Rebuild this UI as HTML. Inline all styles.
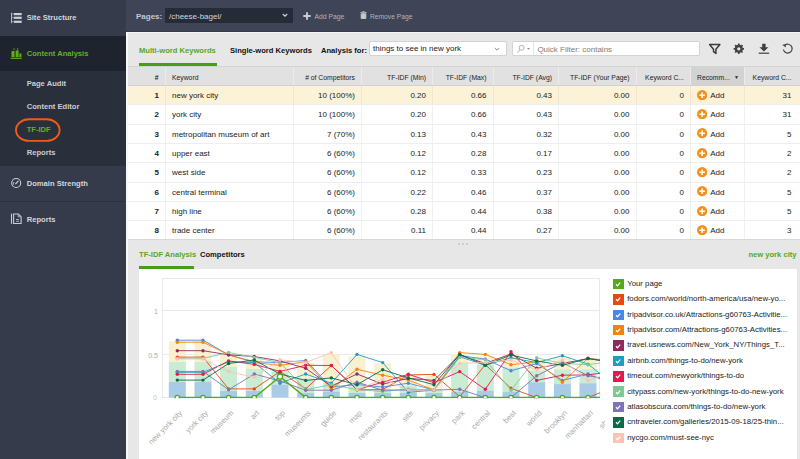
<!DOCTYPE html>
<html><head><meta charset="utf-8"><title>TF-IDF</title>
<style>
*{box-sizing:border-box;margin:0;padding:0}
html,body{width:800px;height:459px;overflow:hidden;background:#353b4b;font-family:"Liberation Sans",sans-serif;}
body{position:relative;font-size:8px;color:#222}
.abs,.side div,.side svg,.top *,.tabs>*,.hdr span,.rows div,.rows span,.lg,.btabs>*{position:absolute}
/* sidebar */
.side{position:absolute;left:0;top:0;width:125.6px;height:459px;background:#353b4b}
.side .r{left:0;width:125.6px}
.side .t{left:26.7px;font-weight:bold;font-size:7.6px;color:#d3d6dd;white-space:nowrap;line-height:10px}
.side .g{color:#60b31e}
/* top bar */
.top{position:absolute;left:125.6px;top:0;width:674.4px;height:31px;background:#3f4556}
/* panel */
.panel{position:absolute;left:127px;top:31.5px;width:673px;height:428px;background:#e7e7e7}
.tabs{position:absolute;left:0;top:0;width:673px;height:35px}
.tabs .tb{font-weight:bold;font-size:7.6px;line-height:10px;white-space:nowrap;color:#111}
.hdr{position:absolute;left:0;top:34px;width:673px;height:20px;background:#e1e1e1;border-top:1px solid #d4d4d4;border-bottom:1px solid #d0d0d0}
.hdr span{top:0;height:18px;line-height:21px;font-size:6.8px;color:#222;white-space:nowrap;border-left:1px solid #ececec;padding:0 6px}
.rows{position:absolute;left:0;top:54px;width:673px;height:153.4px;overflow:hidden;background:#fff}
.rows div{left:0;width:673px;height:20.32px;border-top:1px solid #eeeeee;background:#fff}
.rows div.sel{background:#fbf2d8;border-top-color:#efe6cc}
.rows span{top:0;height:18.32px;line-height:19px;font-size:8px;color:#222;white-space:nowrap;border-left:1px solid #f0f0f0;padding:0 6px;text-align:right}
.rows div.sel span{border-left-color:#efe6cc}
.c0{left:0;width:38px;border-left:none!important}
.c1{left:38px;width:128px}
.c2{left:166px;width:68px}
.c3{left:234px;width:71px}
.c4{left:304.5px;width:61px}
.c5{left:365.5px;width:65.5px}
.c6{left:431px;width:77.5px}
.c7{left:508.5px;width:54.5px}
.c8{left:563px;width:54px}
.c9{left:617px;width:56px;padding-right:8.5px!important}
.rows .c0{font-weight:bold;padding-right:6px}
.rows .c1,.rows .c8{text-align:left}
.rows .c8{padding-left:19.2px}
.addi{position:absolute;left:6.05px;top:3.65px}
.bottom{position:absolute;left:0;top:207.3px;width:673px;height:220px;background:#e7e7e7;border-top:1px solid #d8d8d8}
.btabs .tb{font-weight:bold;font-size:7.6px;line-height:10px;white-space:nowrap;color:#111}
.white{position:absolute;left:12px;top:237.5px;width:658px;height:190px;background:#fff}
.chart{position:absolute;left:12px;top:237.5px}
.dt{position:absolute;top:0;width:2.2px;height:2.2px;background:#c6c6c6;border-radius:1px}
.lg{left:613.2px;height:10px;white-space:nowrap}
.lg i{position:absolute;left:0;top:-0.1px;width:10.4px;height:10.4px;display:block}
.lg i svg{position:absolute;left:0.2px;top:0.2px}
.lg span{position:absolute;left:14px;top:-1px;line-height:11px;font-size:7.8px;color:#222}
</style></head><body>
<div class="side">
  <div class="r" style="top:0;height:36px;background:#353b4b"></div>
  <div class="r" style="top:36px;height:35px;background:#1f232e"></div>
  <div class="r" style="top:71px;height:94px;background:#2a2f3c"></div>
  <div class="r" style="top:165px;height:1px;background:#2b303d"></div>
  <div class="r" style="top:200.5px;height:1px;background:#2c313e"></div>
  <div class="t" style="top:13px">Site Structure</div>
  <div class="t g" style="top:49px">Content Analysis</div>
  <div class="t" style="top:78.5px;color:#c9cdd5">Page Audit</div>
  <div class="t" style="top:102px;color:#c9cdd5">Content Editor</div>
  <div class="t g" style="top:125px">TF-IDF</div>
  <div class="t" style="top:148px;color:#c9cdd5">Reports</div>
  <div class="t" style="top:178.5px">Domain Strength</div>
  <div class="t" style="top:214.5px">Reports</div>
  <svg style="left:0;top:0" width="126" height="240" viewBox="0 0 126 240">
    <!-- site structure icon -->
    <g fill="#ccd0d8"><rect x="11" y="12.8" width="1.1" height="10.4" opacity="0.85"/><rect x="12" y="13.6" width="1.8" height="0.8" opacity="0.6"/><rect x="12" y="17.3" width="1.8" height="0.8" opacity="0.6"/><rect x="12" y="21.3" width="1.8" height="0.8" opacity="0.6"/><rect x="13.8" y="13" width="7.9" height="2.2"/><rect x="13.8" y="16.7" width="7.9" height="2.2"/><rect x="13.8" y="20.7" width="7.9" height="2.2"/></g>
    <!-- content analysis icon -->
    <g fill="#5cb01d"><rect x="11.5" y="51" width="3" height="6"/><rect x="15.6" y="50.4" width="3" height="6.6"/><rect x="19.3" y="53.5" width="2.1" height="3.5"/><rect x="10.7" y="57.7" width="11" height="1.2"/><rect x="13.4" y="48.4" width="1.2" height="1.4"/><rect x="17" y="48.4" width="1.2" height="1.2"/></g>
    <!-- domain strength icon -->
    <g fill="none" stroke="#c8ccd4" stroke-width="1.1"><circle cx="16.2" cy="183" r="4.5"/><path d="M15.4 184l3-3"/><path d="M13.6 184.6a2.8 2.8 0 0 1 0.3 -2.6" stroke-width="0.9"/></g>
    <!-- reports icon -->
    <g fill="none" stroke="#c8ccd4" stroke-width="1.1"><path d="M13.6 214h4.8l2.7 2.7v6.8h-7.5z"/><path d="M11.5 213.6v10.2"/><path d="M16 219.5h3M16 221.3h3" stroke-width="0.8"/><path d="M18.2 214.2v2.6h2.6" stroke-width="0.8"/></g>
    <!-- annotation -->
    <rect x="16" y="119.3" width="43.6" height="21.6" rx="13" ry="10.8" fill="none" stroke="#f15a1b" stroke-width="1.9"/>
  </svg>
</div>
<div class="top"><div class="abs" style="left:0.4px;top:0;width:674px;height:31px">
  <div style="left:10px;top:11.5px;font-weight:bold;font-size:8px;line-height:10px;color:#c4c8d1">Pages:</div>
  <div style="left:39px;top:8px;width:128px;height:15px;background:#262b38;border-radius:1px"></div>
  <div style="left:43px;top:11.5px;font-size:8px;line-height:10px;color:#d3d6dd;white-space:nowrap">/cheese-bagel/</div>
  <svg style="left:156px;top:13px" width="6" height="5" viewBox="0 0 6 5"><path d="M0.8 1l2.2 2.2L5.2 1" fill="none" stroke="#d3d6dd" stroke-width="1.1"/></svg>
  <svg style="left:177.2px;top:11.5px" width="8" height="8" viewBox="0 0 8 8"><path d="M4 0.3v7.4M0.3 4h7.4" stroke="#c9cdd5" stroke-width="1.9"/></svg>
  <div style="left:188.5px;top:11.5px;font-size:6.8px;line-height:9px;color:#aeb3bf;white-space:nowrap">Add Page</div>
  <svg style="left:233.6px;top:11px" width="7" height="8" viewBox="0 0 8 9"><path d="M0.5 1.5h7M3 0.6h2M1.3 3h5.4v5.5H1.3z" fill="#c4c8d1" stroke="#c4c8d1" stroke-width="1"/></svg>
  <div style="left:244px;top:11.5px;font-size:6.7px;line-height:9px;color:#aeb3bf;white-space:nowrap">Remove Page</div>
</div></div>
<div class="abs" style="left:125.5px;top:31.6px;width:0.8px;height:428px;background:#1b1f2b"></div>
<div class="panel">
  <div class="abs" style="left:0;top:0;width:673px;height:1px;background:#f4f4f4"></div>
  <div class="tabs">
    <div class="tb" style="left:12px;top:14px;color:#55a91c">Multi-word Keywords</div>
    <div style="left:12px;top:31px;width:77.5px;height:3px;background:#479f10"></div>
    <div class="tb" style="left:103px;top:14px">Single-word Keywords</div>
    <div class="tb" style="left:194px;top:14px">Analysis for:</div>
    <div style="left:242.2px;top:9.5px;width:137.4px;height:15px;background:#fff;border:1px solid #d3d3d3;border-radius:2px"></div>
    <div style="left:246px;top:12px;font-size:8px;line-height:10px;white-space:nowrap;color:#222">things to see in new york</div>
    <svg style="left:367px;top:15px" width="6" height="5" viewBox="0 0 6 5"><path d="M0.8 1l2.2 2.2L5.2 1" fill="none" stroke="#808080" stroke-width="0.95"/></svg>
    <div style="left:385.4px;top:9.6px;width:187.2px;height:14.8px;background:#fff;border:1px solid #d3d3d3;border-radius:2px"></div>
    <div style="left:406px;top:10.6px;width:1px;height:12.8px;background:#e2e2e2"></div>
    <svg style="left:389.4px;top:12px" width="16" height="10" viewBox="0 0 16 10"><circle cx="5.6" cy="3.8" r="2.5" fill="none" stroke="#aaa" stroke-width="0.9"/><path d="M3.8 5.8L1.5 8.5" stroke="#aaa" stroke-width="1"/><path d="M11 4h3l-1.5 1.8z" fill="#888"/></svg>
    <div style="left:410.4px;top:13.2px;font-size:8px;line-height:10px;white-space:nowrap;color:#7c7c7c">Quick Filter: contains</div>
    <svg style="left:577px;top:9.5px" width="96" height="18" viewBox="704 41 96 18">
      <path d="M709.6 44.6h10.3l-4 4.6v4.2l-2.4-1.8v-2.4z" fill="none" stroke="#3a3a3a" stroke-width="1.5" stroke-linejoin="round"/>
      <g transform="translate(738.8 48.8)"><circle r="3" fill="none" stroke="#444" stroke-width="2.1"/><g stroke="#444" stroke-width="1.7"><path d="M0 -5.2v10.4M-5.2 0h10.4M-3.7 -3.7l7.4 7.4M-3.7 3.7l7.4 -7.4"/></g><circle r="1.6" fill="#e7e7e7"/></g>
      <g fill="#3f3f3f"><path d="M762.2 43.7h3.4v3.6h2.8l-4.5 4.2-4.5-4.2h2.8z"/><rect x="758.7" y="52.6" width="10.4" height="1.2"/></g>
      <path d="M784.6 45.5A4.4 4.4 0 1 1 783.4 49.5" fill="none" stroke="#444" stroke-width="1.2"/><path d="M782.4 44.6h3.2v3.2z" fill="#333" transform="rotate(-8 784 46)"/>
    </svg>
  </div>
  <div class="hdr">
    <span class="c0" style="text-align:right;font-weight:bold;padding-right:6.5px">#</span>
    <span class="c1">Keyword</span>
    <span class="c2" style="text-align:right"># of Competitors</span>
    <span class="c3" style="text-align:right">TF-IDF (Min)</span>
    <span class="c4" style="text-align:right">TF-IDF (Max)</span>
    <span class="c5" style="text-align:right">TF-IDF (Avg)</span>
    <span class="c6" style="text-align:right">TF-IDF (Your Page)</span>
    <span class="c7" style="text-align:right">Keyword C...</span>
    <span class="c8" style="background:#d3d3d3">Recomm...<b style="position:absolute;right:5px;top:0;font-size:5px">&#9660;</b></span>
    <span class="c9" style="text-align:right">Keyword C...</span>
  </div>
  <div class="rows">
<div class="sel" style="top:-0.50px"><span class="c0">1</span><span class="c1">new york city</span><span class="c2">10 (100%)</span><span class="c3">0.20</span><span class="c4">0.66</span><span class="c5">0.43</span><span class="c6">0.00</span><span class="c7">0</span><span class="c8"><svg class="addi" width="10.3" height="10.3" viewBox="0 0 10.3 10.3"><circle cx="5.15" cy="5.15" r="5.15" fill="#f6901c"/><path d="M5.15 2.4v5.5M2.4 5.15h5.5" stroke="#fff" stroke-width="1.5"/></svg>Add</span><span class="c9">31</span></div>
<div style="top:18.82px"><span class="c0">2</span><span class="c1">york city</span><span class="c2">10 (100%)</span><span class="c3">0.20</span><span class="c4">0.66</span><span class="c5">0.43</span><span class="c6">0.00</span><span class="c7">0</span><span class="c8"><svg class="addi" width="10.3" height="10.3" viewBox="0 0 10.3 10.3"><circle cx="5.15" cy="5.15" r="5.15" fill="#f6901c"/><path d="M5.15 2.4v5.5M2.4 5.15h5.5" stroke="#fff" stroke-width="1.5"/></svg>Add</span><span class="c9">31</span></div>
<div style="top:38.14px"><span class="c0">3</span><span class="c1">metropolitan museum of art</span><span class="c2">7 (70%)</span><span class="c3">0.13</span><span class="c4">0.43</span><span class="c5">0.32</span><span class="c6">0.00</span><span class="c7">0</span><span class="c8"><svg class="addi" width="10.3" height="10.3" viewBox="0 0 10.3 10.3"><circle cx="5.15" cy="5.15" r="5.15" fill="#f6901c"/><path d="M5.15 2.4v5.5M2.4 5.15h5.5" stroke="#fff" stroke-width="1.5"/></svg>Add</span><span class="c9">5</span></div>
<div style="top:57.46px"><span class="c0">4</span><span class="c1">upper east</span><span class="c2">6 (60%)</span><span class="c3">0.12</span><span class="c4">0.28</span><span class="c5">0.17</span><span class="c6">0.00</span><span class="c7">0</span><span class="c8"><svg class="addi" width="10.3" height="10.3" viewBox="0 0 10.3 10.3"><circle cx="5.15" cy="5.15" r="5.15" fill="#f6901c"/><path d="M5.15 2.4v5.5M2.4 5.15h5.5" stroke="#fff" stroke-width="1.5"/></svg>Add</span><span class="c9">2</span></div>
<div style="top:76.78px"><span class="c0">5</span><span class="c1">west side</span><span class="c2">6 (60%)</span><span class="c3">0.12</span><span class="c4">0.33</span><span class="c5">0.23</span><span class="c6">0.00</span><span class="c7">0</span><span class="c8"><svg class="addi" width="10.3" height="10.3" viewBox="0 0 10.3 10.3"><circle cx="5.15" cy="5.15" r="5.15" fill="#f6901c"/><path d="M5.15 2.4v5.5M2.4 5.15h5.5" stroke="#fff" stroke-width="1.5"/></svg>Add</span><span class="c9">2</span></div>
<div style="top:96.10px"><span class="c0">6</span><span class="c1">central terminal</span><span class="c2">6 (60%)</span><span class="c3">0.22</span><span class="c4">0.46</span><span class="c5">0.37</span><span class="c6">0.00</span><span class="c7">0</span><span class="c8"><svg class="addi" width="10.3" height="10.3" viewBox="0 0 10.3 10.3"><circle cx="5.15" cy="5.15" r="5.15" fill="#f6901c"/><path d="M5.15 2.4v5.5M2.4 5.15h5.5" stroke="#fff" stroke-width="1.5"/></svg>Add</span><span class="c9">5</span></div>
<div style="top:115.42px"><span class="c0">7</span><span class="c1">high line</span><span class="c2">6 (60%)</span><span class="c3">0.28</span><span class="c4">0.44</span><span class="c5">0.38</span><span class="c6">0.00</span><span class="c7">0</span><span class="c8"><svg class="addi" width="10.3" height="10.3" viewBox="0 0 10.3 10.3"><circle cx="5.15" cy="5.15" r="5.15" fill="#f6901c"/><path d="M5.15 2.4v5.5M2.4 5.15h5.5" stroke="#fff" stroke-width="1.5"/></svg>Add</span><span class="c9">5</span></div>
<div style="top:134.74px"><span class="c0">8</span><span class="c1">trade center</span><span class="c2">6 (60%)</span><span class="c3">0.11</span><span class="c4">0.44</span><span class="c5">0.27</span><span class="c6">0.00</span><span class="c7">0</span><span class="c8"><svg class="addi" width="10.3" height="10.3" viewBox="0 0 10.3 10.3"><circle cx="5.15" cy="5.15" r="5.15" fill="#f6901c"/><path d="M5.15 2.4v5.5M2.4 5.15h5.5" stroke="#fff" stroke-width="1.5"/></svg>Add</span><span class="c9">3</span></div>
  </div>
  <div class="bottom"></div>
  <div class="abs" style="left:331.3px;top:211.7px;width:12px;height:3px"><i class="dt" style="left:0"></i><i class="dt" style="left:3.8px"></i><i class="dt" style="left:7.6px"></i></div>
  <div class="btabs">
    <div class="tb" style="left:12px;top:218px;color:#55a91c">TF-IDF Analysis</div>
    <div style="left:12px;top:234.8px;width:55px;height:2.8px;background:#479f10"></div>
    <div class="tb" style="left:73px;top:218px">Competitors</div>
    <div class="tb" style="right:3.5px;top:218px;color:#55a91c">new york city</div>
  </div>
  <div class="white"></div>
<svg class="chart" width="466" height="190" viewBox="139 269 466 190">
<defs><clipPath id="cp"><rect x="162" y="278" width="438" height="120.3"/></clipPath></defs>
<g stroke="#e9e9e9" stroke-width="1" fill="none">
<path d="M162.5 278.5H599.5V397.5"/>
<path d="M162.5 278.5V397.5"/>
<path d="M162 310.5H600M162 354.5H600M162 397.5H600"/>
</g>
<g clip-path="url(#cp)">
<rect x="168.8" y="341.2" width="17" height="20.5" fill="#f9f0d0"/>
<rect x="168.8" y="361.8" width="17" height="20.1" fill="#c9ecd2"/>
<rect x="168.8" y="381.9" width="17" height="15.7" fill="#a9cbe6"/>
<rect x="194.5" y="341.2" width="17" height="20.5" fill="#f9f0d0"/>
<rect x="194.5" y="361.8" width="17" height="20.1" fill="#c9ecd2"/>
<rect x="194.5" y="381.9" width="17" height="15.7" fill="#a9cbe6"/>
<rect x="220.1" y="354.8" width="17" height="12.2" fill="#f9f0d0"/>
<rect x="220.1" y="367.0" width="17" height="24.0" fill="#c9ecd2"/>
<rect x="220.1" y="391.0" width="17" height="6.6" fill="#a9cbe6"/>
<rect x="245.8" y="359.1" width="17" height="9.9" fill="#f9f0d0"/>
<rect x="245.8" y="369.0" width="17" height="21.8" fill="#c9ecd2"/>
<rect x="245.8" y="390.9" width="17" height="6.7" fill="#a9cbe6"/>
<rect x="271.5" y="361.8" width="17" height="9.6" fill="#f9f0d0"/>
<rect x="271.5" y="371.4" width="17" height="13.1" fill="#c9ecd2"/>
<rect x="271.5" y="384.5" width="17" height="13.1" fill="#a9cbe6"/>
<rect x="297.2" y="362.6" width="17" height="15.7" fill="#f9f0d0"/>
<rect x="297.2" y="378.4" width="17" height="14.6" fill="#c9ecd2"/>
<rect x="297.2" y="393.0" width="17" height="4.6" fill="#a9cbe6"/>
<rect x="322.8" y="353.9" width="17" height="29.3" fill="#f9f0d0"/>
<rect x="322.8" y="383.2" width="17" height="8.3" fill="#c9ecd2"/>
<rect x="322.8" y="391.5" width="17" height="6.1" fill="#a9cbe6"/>
<rect x="348.5" y="356.5" width="17" height="28.8" fill="#f9f0d0"/>
<rect x="348.5" y="385.4" width="17" height="7.6" fill="#c9ecd2"/>
<rect x="348.5" y="393.0" width="17" height="4.6" fill="#a9cbe6"/>
<rect x="374.2" y="363.5" width="17" height="25.3" fill="#f9f0d0"/>
<rect x="374.2" y="388.9" width="17" height="4.1" fill="#c9ecd2"/>
<rect x="374.2" y="393.0" width="17" height="4.6" fill="#a9cbe6"/>
<rect x="399.8" y="375.8" width="17" height="9.6" fill="#f9f0d0"/>
<rect x="399.8" y="385.4" width="17" height="7.6" fill="#c9ecd2"/>
<rect x="399.8" y="393.0" width="17" height="4.6" fill="#a9cbe6"/>
<rect x="425.5" y="375.8" width="17" height="14.0" fill="#f9f0d0"/>
<rect x="425.5" y="389.7" width="17" height="3.2" fill="#c9ecd2"/>
<rect x="425.5" y="393.0" width="17" height="4.6" fill="#a9cbe6"/>
<rect x="451.2" y="353.9" width="17" height="9.6" fill="#f9f0d0"/>
<rect x="451.2" y="363.5" width="17" height="28.0" fill="#c9ecd2"/>
<rect x="451.2" y="391.5" width="17" height="6.1" fill="#a9cbe6"/>
<rect x="476.8" y="356.5" width="17" height="8.1" fill="#f9f0d0"/>
<rect x="476.8" y="364.7" width="17" height="26.0" fill="#c9ecd2"/>
<rect x="476.8" y="390.6" width="17" height="7.0" fill="#a9cbe6"/>
<rect x="502.5" y="353.9" width="17" height="13.5" fill="#f9f0d0"/>
<rect x="502.5" y="367.4" width="17" height="24.0" fill="#c9ecd2"/>
<rect x="502.5" y="391.5" width="17" height="6.1" fill="#a9cbe6"/>
<rect x="528.2" y="360.0" width="17" height="10.5" fill="#f9f0d0"/>
<rect x="528.2" y="370.5" width="17" height="11.7" fill="#c9ecd2"/>
<rect x="528.2" y="382.2" width="17" height="15.4" fill="#a9cbe6"/>
<rect x="553.9" y="357.4" width="17" height="11.9" fill="#f9f0d0"/>
<rect x="553.9" y="369.3" width="17" height="14.8" fill="#c9ecd2"/>
<rect x="553.9" y="384.1" width="17" height="13.5" fill="#a9cbe6"/>
<rect x="579.5" y="360.0" width="17" height="9.3" fill="#f9f0d0"/>
<rect x="579.5" y="369.3" width="17" height="13.9" fill="#c9ecd2"/>
<rect x="579.5" y="383.2" width="17" height="14.4" fill="#a9cbe6"/>
<rect x="605.2" y="358.3" width="17" height="13.1" fill="#f9f0d0"/>
<rect x="605.2" y="371.4" width="17" height="17.5" fill="#c9ecd2"/>
<rect x="605.2" y="388.9" width="17" height="8.7" fill="#a9cbe6"/>
<polyline points="177.3,357.1 203.0,357.1 228.6,388.9 254.3,388.9 280.0,371.4 305.7,388.9 331.3,365.5 357.0,389.7 382.7,389.7 408.3,374.9 434.0,374.4 459.7,396.7 485.3,364.7 511.0,388.3 536.7,397.6 562.4,397.6 588.0,397.6 613.7,387.1" fill="none" stroke="#e8490f" stroke-width="0.9"/>
<circle cx="177.3" cy="357.1" r="1.7" fill="#e8490f"/>
<circle cx="203.0" cy="357.1" r="1.7" fill="#e8490f"/>
<circle cx="228.6" cy="388.9" r="1.7" fill="#e8490f"/>
<circle cx="254.3" cy="388.9" r="1.7" fill="#e8490f"/>
<circle cx="280.0" cy="371.4" r="1.7" fill="#e8490f"/>
<circle cx="305.7" cy="388.9" r="1.7" fill="#e8490f"/>
<circle cx="331.3" cy="365.5" r="1.7" fill="#e8490f"/>
<circle cx="357.0" cy="389.7" r="1.7" fill="#e8490f"/>
<circle cx="382.7" cy="389.7" r="1.7" fill="#e8490f"/>
<circle cx="408.3" cy="374.9" r="1.7" fill="#e8490f"/>
<circle cx="434.0" cy="374.4" r="1.7" fill="#e8490f"/>
<circle cx="459.7" cy="396.7" r="1.7" fill="#e8490f"/>
<circle cx="485.3" cy="364.7" r="1.7" fill="#e8490f"/>
<circle cx="511.0" cy="388.3" r="1.7" fill="#e8490f"/>
<circle cx="536.7" cy="397.6" r="1.7" fill="#e8490f"/>
<circle cx="562.4" cy="397.6" r="1.7" fill="#e8490f"/>
<circle cx="588.0" cy="397.6" r="1.7" fill="#e8490f"/>
<circle cx="613.7" cy="387.1" r="1.7" fill="#e8490f"/>
<polyline points="177.3,340.2 203.0,340.2 228.6,354.8 254.3,361.8 280.0,362.6 305.7,360.5 331.3,387.1 357.0,384.5 382.7,387.1 408.3,383.2 434.0,390.0 459.7,355.6 485.3,359.1 511.0,370.8 536.7,363.5 562.4,380.4 588.0,374.0 613.7,384.5" fill="none" stroke="#4a86e8" stroke-width="0.9"/>
<circle cx="177.3" cy="340.2" r="1.7" fill="#4a86e8"/>
<circle cx="203.0" cy="340.2" r="1.7" fill="#4a86e8"/>
<circle cx="228.6" cy="354.8" r="1.7" fill="#4a86e8"/>
<circle cx="254.3" cy="361.8" r="1.7" fill="#4a86e8"/>
<circle cx="280.0" cy="362.6" r="1.7" fill="#4a86e8"/>
<circle cx="305.7" cy="360.5" r="1.7" fill="#4a86e8"/>
<circle cx="331.3" cy="387.1" r="1.7" fill="#4a86e8"/>
<circle cx="357.0" cy="384.5" r="1.7" fill="#4a86e8"/>
<circle cx="382.7" cy="387.1" r="1.7" fill="#4a86e8"/>
<circle cx="408.3" cy="383.2" r="1.7" fill="#4a86e8"/>
<circle cx="434.0" cy="390.0" r="1.7" fill="#4a86e8"/>
<circle cx="459.7" cy="355.6" r="1.7" fill="#4a86e8"/>
<circle cx="485.3" cy="359.1" r="1.7" fill="#4a86e8"/>
<circle cx="511.0" cy="370.8" r="1.7" fill="#4a86e8"/>
<circle cx="536.7" cy="363.5" r="1.7" fill="#4a86e8"/>
<circle cx="562.4" cy="380.4" r="1.7" fill="#4a86e8"/>
<circle cx="588.0" cy="374.0" r="1.7" fill="#4a86e8"/>
<circle cx="613.7" cy="384.5" r="1.7" fill="#4a86e8"/>
<polyline points="177.3,342.2 203.0,342.2 228.6,354.8 254.3,362.6 280.0,365.3 305.7,361.8 331.3,388.9 357.0,369.3 382.7,375.2 408.3,380.1 434.0,390.0 459.7,352.6 485.3,354.4 511.0,364.7 536.7,361.8 562.4,382.2 588.0,358.3 613.7,360.9" fill="none" stroke="#f5820a" stroke-width="0.9"/>
<circle cx="177.3" cy="342.2" r="1.7" fill="#f5820a"/>
<circle cx="203.0" cy="342.2" r="1.7" fill="#f5820a"/>
<circle cx="228.6" cy="354.8" r="1.7" fill="#f5820a"/>
<circle cx="254.3" cy="362.6" r="1.7" fill="#f5820a"/>
<circle cx="280.0" cy="365.3" r="1.7" fill="#f5820a"/>
<circle cx="305.7" cy="361.8" r="1.7" fill="#f5820a"/>
<circle cx="331.3" cy="388.9" r="1.7" fill="#f5820a"/>
<circle cx="357.0" cy="369.3" r="1.7" fill="#f5820a"/>
<circle cx="382.7" cy="375.2" r="1.7" fill="#f5820a"/>
<circle cx="408.3" cy="380.1" r="1.7" fill="#f5820a"/>
<circle cx="434.0" cy="390.0" r="1.7" fill="#f5820a"/>
<circle cx="459.7" cy="352.6" r="1.7" fill="#f5820a"/>
<circle cx="485.3" cy="354.4" r="1.7" fill="#f5820a"/>
<circle cx="511.0" cy="364.7" r="1.7" fill="#f5820a"/>
<circle cx="536.7" cy="361.8" r="1.7" fill="#f5820a"/>
<circle cx="562.4" cy="382.2" r="1.7" fill="#f5820a"/>
<circle cx="588.0" cy="358.3" r="1.7" fill="#f5820a"/>
<circle cx="613.7" cy="360.9" r="1.7" fill="#f5820a"/>
<polyline points="177.3,350.7 203.0,350.7 228.6,354.8 254.3,356.5 280.0,360.9 305.7,368.3 331.3,386.2 357.0,374.0 382.7,384.1 408.3,378.4 434.0,380.4 459.7,354.8 485.3,363.5 511.0,353.9 536.7,368.3 562.4,363.5 588.0,358.5 613.7,362.6" fill="none" stroke="#8e2a5e" stroke-width="0.9"/>
<circle cx="177.3" cy="350.7" r="1.7" fill="#8e2a5e"/>
<circle cx="203.0" cy="350.7" r="1.7" fill="#8e2a5e"/>
<circle cx="228.6" cy="354.8" r="1.7" fill="#8e2a5e"/>
<circle cx="254.3" cy="356.5" r="1.7" fill="#8e2a5e"/>
<circle cx="280.0" cy="360.9" r="1.7" fill="#8e2a5e"/>
<circle cx="305.7" cy="368.3" r="1.7" fill="#8e2a5e"/>
<circle cx="331.3" cy="386.2" r="1.7" fill="#8e2a5e"/>
<circle cx="357.0" cy="374.0" r="1.7" fill="#8e2a5e"/>
<circle cx="382.7" cy="384.1" r="1.7" fill="#8e2a5e"/>
<circle cx="408.3" cy="378.4" r="1.7" fill="#8e2a5e"/>
<circle cx="434.0" cy="380.4" r="1.7" fill="#8e2a5e"/>
<circle cx="459.7" cy="354.8" r="1.7" fill="#8e2a5e"/>
<circle cx="485.3" cy="363.5" r="1.7" fill="#8e2a5e"/>
<circle cx="511.0" cy="353.9" r="1.7" fill="#8e2a5e"/>
<circle cx="536.7" cy="368.3" r="1.7" fill="#8e2a5e"/>
<circle cx="562.4" cy="363.5" r="1.7" fill="#8e2a5e"/>
<circle cx="588.0" cy="358.5" r="1.7" fill="#8e2a5e"/>
<circle cx="613.7" cy="362.6" r="1.7" fill="#8e2a5e"/>
<polyline points="177.3,372.3 203.0,372.3 228.6,361.8 254.3,362.6 280.0,383.2 305.7,374.0 331.3,383.2 357.0,354.4 382.7,362.6 408.3,392.4 434.0,390.0 459.7,356.7 485.3,365.3 511.0,357.8 536.7,362.6 562.4,355.7 588.0,364.1 613.7,384.5" fill="none" stroke="#1a9fc0" stroke-width="0.9"/>
<circle cx="177.3" cy="372.3" r="1.7" fill="#1a9fc0"/>
<circle cx="203.0" cy="372.3" r="1.7" fill="#1a9fc0"/>
<circle cx="228.6" cy="361.8" r="1.7" fill="#1a9fc0"/>
<circle cx="254.3" cy="362.6" r="1.7" fill="#1a9fc0"/>
<circle cx="280.0" cy="383.2" r="1.7" fill="#1a9fc0"/>
<circle cx="305.7" cy="374.0" r="1.7" fill="#1a9fc0"/>
<circle cx="331.3" cy="383.2" r="1.7" fill="#1a9fc0"/>
<circle cx="357.0" cy="354.4" r="1.7" fill="#1a9fc0"/>
<circle cx="382.7" cy="362.6" r="1.7" fill="#1a9fc0"/>
<circle cx="408.3" cy="392.4" r="1.7" fill="#1a9fc0"/>
<circle cx="434.0" cy="390.0" r="1.7" fill="#1a9fc0"/>
<circle cx="459.7" cy="356.7" r="1.7" fill="#1a9fc0"/>
<circle cx="485.3" cy="365.3" r="1.7" fill="#1a9fc0"/>
<circle cx="511.0" cy="357.8" r="1.7" fill="#1a9fc0"/>
<circle cx="536.7" cy="362.6" r="1.7" fill="#1a9fc0"/>
<circle cx="562.4" cy="355.7" r="1.7" fill="#1a9fc0"/>
<circle cx="588.0" cy="364.1" r="1.7" fill="#1a9fc0"/>
<circle cx="613.7" cy="384.5" r="1.7" fill="#1a9fc0"/>
<polyline points="177.3,374.3 203.0,374.3 228.6,360.9 254.3,364.4 280.0,371.4 305.7,365.3 331.3,365.5 357.0,389.7 382.7,382.2 408.3,374.3 434.0,382.7 459.7,371.6 485.3,389.3 511.0,351.7 536.7,380.4 562.4,375.2 588.0,374.9 613.7,371.4" fill="none" stroke="#e6194f" stroke-width="0.9"/>
<circle cx="177.3" cy="374.3" r="1.7" fill="#e6194f"/>
<circle cx="203.0" cy="374.3" r="1.7" fill="#e6194f"/>
<circle cx="228.6" cy="360.9" r="1.7" fill="#e6194f"/>
<circle cx="254.3" cy="364.4" r="1.7" fill="#e6194f"/>
<circle cx="280.0" cy="371.4" r="1.7" fill="#e6194f"/>
<circle cx="305.7" cy="365.3" r="1.7" fill="#e6194f"/>
<circle cx="331.3" cy="365.5" r="1.7" fill="#e6194f"/>
<circle cx="357.0" cy="389.7" r="1.7" fill="#e6194f"/>
<circle cx="382.7" cy="382.2" r="1.7" fill="#e6194f"/>
<circle cx="408.3" cy="374.3" r="1.7" fill="#e6194f"/>
<circle cx="434.0" cy="382.7" r="1.7" fill="#e6194f"/>
<circle cx="459.7" cy="371.6" r="1.7" fill="#e6194f"/>
<circle cx="485.3" cy="389.3" r="1.7" fill="#e6194f"/>
<circle cx="511.0" cy="351.7" r="1.7" fill="#e6194f"/>
<circle cx="536.7" cy="380.4" r="1.7" fill="#e6194f"/>
<circle cx="562.4" cy="375.2" r="1.7" fill="#e6194f"/>
<circle cx="588.0" cy="374.9" r="1.7" fill="#e6194f"/>
<circle cx="613.7" cy="371.4" r="1.7" fill="#e6194f"/>
<polyline points="177.3,358.3 203.0,358.3 228.6,352.5 254.3,357.4 280.0,362.6 305.7,389.7 331.3,384.7 357.0,389.7 382.7,391.5 408.3,388.9 434.0,390.0 459.7,357.4 485.3,359.6 511.0,390.2 536.7,357.8 562.4,363.5 588.0,364.7 613.7,360.9" fill="none" stroke="#7fc896" stroke-width="0.9"/>
<circle cx="177.3" cy="358.3" r="1.7" fill="#7fc896"/>
<circle cx="203.0" cy="358.3" r="1.7" fill="#7fc896"/>
<circle cx="228.6" cy="352.5" r="1.7" fill="#7fc896"/>
<circle cx="254.3" cy="357.4" r="1.7" fill="#7fc896"/>
<circle cx="280.0" cy="362.6" r="1.7" fill="#7fc896"/>
<circle cx="305.7" cy="389.7" r="1.7" fill="#7fc896"/>
<circle cx="331.3" cy="384.7" r="1.7" fill="#7fc896"/>
<circle cx="357.0" cy="389.7" r="1.7" fill="#7fc896"/>
<circle cx="382.7" cy="391.5" r="1.7" fill="#7fc896"/>
<circle cx="408.3" cy="388.9" r="1.7" fill="#7fc896"/>
<circle cx="434.0" cy="390.0" r="1.7" fill="#7fc896"/>
<circle cx="459.7" cy="357.4" r="1.7" fill="#7fc896"/>
<circle cx="485.3" cy="359.6" r="1.7" fill="#7fc896"/>
<circle cx="511.0" cy="390.2" r="1.7" fill="#7fc896"/>
<circle cx="536.7" cy="357.8" r="1.7" fill="#7fc896"/>
<circle cx="562.4" cy="363.5" r="1.7" fill="#7fc896"/>
<circle cx="588.0" cy="364.7" r="1.7" fill="#7fc896"/>
<circle cx="613.7" cy="360.9" r="1.7" fill="#7fc896"/>
<polyline points="177.3,371.4 203.0,371.4 228.6,389.7 254.3,374.0 280.0,381.0 305.7,390.2 331.3,390.2 357.0,382.2 382.7,390.2 408.3,390.0 434.0,390.0 459.7,389.3 485.3,397.6 511.0,397.6 536.7,375.8 562.4,362.6 588.0,375.8 613.7,380.1" fill="none" stroke="#7b74b8" stroke-width="0.9"/>
<circle cx="177.3" cy="371.4" r="1.7" fill="#7b74b8"/>
<circle cx="203.0" cy="371.4" r="1.7" fill="#7b74b8"/>
<circle cx="228.6" cy="389.7" r="1.7" fill="#7b74b8"/>
<circle cx="254.3" cy="374.0" r="1.7" fill="#7b74b8"/>
<circle cx="280.0" cy="381.0" r="1.7" fill="#7b74b8"/>
<circle cx="305.7" cy="390.2" r="1.7" fill="#7b74b8"/>
<circle cx="331.3" cy="390.2" r="1.7" fill="#7b74b8"/>
<circle cx="357.0" cy="382.2" r="1.7" fill="#7b74b8"/>
<circle cx="382.7" cy="390.2" r="1.7" fill="#7b74b8"/>
<circle cx="408.3" cy="390.0" r="1.7" fill="#7b74b8"/>
<circle cx="434.0" cy="390.0" r="1.7" fill="#7b74b8"/>
<circle cx="459.7" cy="389.3" r="1.7" fill="#7b74b8"/>
<circle cx="485.3" cy="397.6" r="1.7" fill="#7b74b8"/>
<circle cx="511.0" cy="397.6" r="1.7" fill="#7b74b8"/>
<circle cx="536.7" cy="375.8" r="1.7" fill="#7b74b8"/>
<circle cx="562.4" cy="362.6" r="1.7" fill="#7b74b8"/>
<circle cx="588.0" cy="375.8" r="1.7" fill="#7b74b8"/>
<circle cx="613.7" cy="380.1" r="1.7" fill="#7b74b8"/>
<polyline points="177.3,380.1 203.0,380.1 228.6,363.5 254.3,360.0 280.0,374.0 305.7,380.4 331.3,377.9 357.0,384.7 382.7,369.8 408.3,377.9 434.0,384.7 459.7,354.4 485.3,365.3 511.0,355.0 536.7,360.9 562.4,365.3 588.0,358.5 613.7,362.6" fill="none" stroke="#0b6b47" stroke-width="0.9"/>
<circle cx="177.3" cy="380.1" r="1.7" fill="#0b6b47"/>
<circle cx="203.0" cy="380.1" r="1.7" fill="#0b6b47"/>
<circle cx="228.6" cy="363.5" r="1.7" fill="#0b6b47"/>
<circle cx="254.3" cy="360.0" r="1.7" fill="#0b6b47"/>
<circle cx="280.0" cy="374.0" r="1.7" fill="#0b6b47"/>
<circle cx="305.7" cy="380.4" r="1.7" fill="#0b6b47"/>
<circle cx="331.3" cy="377.9" r="1.7" fill="#0b6b47"/>
<circle cx="357.0" cy="384.7" r="1.7" fill="#0b6b47"/>
<circle cx="382.7" cy="369.8" r="1.7" fill="#0b6b47"/>
<circle cx="408.3" cy="377.9" r="1.7" fill="#0b6b47"/>
<circle cx="434.0" cy="384.7" r="1.7" fill="#0b6b47"/>
<circle cx="459.7" cy="354.4" r="1.7" fill="#0b6b47"/>
<circle cx="485.3" cy="365.3" r="1.7" fill="#0b6b47"/>
<circle cx="511.0" cy="355.0" r="1.7" fill="#0b6b47"/>
<circle cx="536.7" cy="360.9" r="1.7" fill="#0b6b47"/>
<circle cx="562.4" cy="365.3" r="1.7" fill="#0b6b47"/>
<circle cx="588.0" cy="358.5" r="1.7" fill="#0b6b47"/>
<circle cx="613.7" cy="362.6" r="1.7" fill="#0b6b47"/>
<polyline points="177.3,359.1 203.0,359.1 228.6,371.4 254.3,377.5 280.0,359.7 305.7,362.6 331.3,352.6 357.0,389.7 382.7,379.2 408.3,390.0 434.0,390.0 459.7,363.2 485.3,362.6 511.0,360.0 536.7,369.8 562.4,360.0 588.0,380.7 613.7,371.4" fill="none" stroke="#fbc3b3" stroke-width="0.9"/>
<circle cx="177.3" cy="359.1" r="1.7" fill="#fbc3b3"/>
<circle cx="203.0" cy="359.1" r="1.7" fill="#fbc3b3"/>
<circle cx="228.6" cy="371.4" r="1.7" fill="#fbc3b3"/>
<circle cx="254.3" cy="377.5" r="1.7" fill="#fbc3b3"/>
<circle cx="280.0" cy="359.7" r="1.7" fill="#fbc3b3"/>
<circle cx="305.7" cy="362.6" r="1.7" fill="#fbc3b3"/>
<circle cx="331.3" cy="352.6" r="1.7" fill="#fbc3b3"/>
<circle cx="357.0" cy="389.7" r="1.7" fill="#fbc3b3"/>
<circle cx="382.7" cy="379.2" r="1.7" fill="#fbc3b3"/>
<circle cx="408.3" cy="390.0" r="1.7" fill="#fbc3b3"/>
<circle cx="434.0" cy="390.0" r="1.7" fill="#fbc3b3"/>
<circle cx="459.7" cy="363.2" r="1.7" fill="#fbc3b3"/>
<circle cx="485.3" cy="362.6" r="1.7" fill="#fbc3b3"/>
<circle cx="511.0" cy="360.0" r="1.7" fill="#fbc3b3"/>
<circle cx="536.7" cy="369.8" r="1.7" fill="#fbc3b3"/>
<circle cx="562.4" cy="360.0" r="1.7" fill="#fbc3b3"/>
<circle cx="588.0" cy="380.7" r="1.7" fill="#fbc3b3"/>
<circle cx="613.7" cy="371.4" r="1.7" fill="#fbc3b3"/>
<polyline points="177.3,397.6 203.0,397.6 228.6,397.6 254.3,397.6 280.0,376.6 305.7,397.6 331.3,397.6 357.0,397.6 382.7,397.6 408.3,397.6 434.0,397.6 459.7,397.6 485.3,397.6 511.0,397.6 536.7,397.6 562.4,397.6 588.0,397.6 613.7,397.6" fill="none" stroke="#55a91c" stroke-width="1.5"/>
<circle cx="177.3" cy="397.6" r="2.2" fill="#fff" stroke="#55a91c" stroke-width="1.3"/>
<circle cx="203.0" cy="397.6" r="2.2" fill="#fff" stroke="#55a91c" stroke-width="1.3"/>
<circle cx="228.6" cy="397.6" r="2.2" fill="#fff" stroke="#55a91c" stroke-width="1.3"/>
<circle cx="254.3" cy="397.6" r="2.2" fill="#fff" stroke="#55a91c" stroke-width="1.3"/>
<circle cx="280.0" cy="376.6" r="2.6" fill="#fff" stroke="#55a91c" stroke-width="1.3"/>
<circle cx="305.7" cy="397.6" r="2.2" fill="#fff" stroke="#55a91c" stroke-width="1.3"/>
<circle cx="331.3" cy="397.6" r="2.2" fill="#fff" stroke="#55a91c" stroke-width="1.3"/>
<circle cx="357.0" cy="397.6" r="2.2" fill="#fff" stroke="#55a91c" stroke-width="1.3"/>
<circle cx="382.7" cy="397.6" r="2.2" fill="#fff" stroke="#55a91c" stroke-width="1.3"/>
<circle cx="408.3" cy="397.6" r="2.2" fill="#fff" stroke="#55a91c" stroke-width="1.3"/>
<circle cx="434.0" cy="397.6" r="2.2" fill="#fff" stroke="#55a91c" stroke-width="1.3"/>
<circle cx="459.7" cy="397.6" r="2.2" fill="#fff" stroke="#55a91c" stroke-width="1.3"/>
<circle cx="485.3" cy="397.6" r="2.2" fill="#fff" stroke="#55a91c" stroke-width="1.3"/>
<circle cx="511.0" cy="397.6" r="2.2" fill="#fff" stroke="#55a91c" stroke-width="1.3"/>
<circle cx="536.7" cy="397.6" r="2.2" fill="#fff" stroke="#55a91c" stroke-width="1.3"/>
<circle cx="562.4" cy="397.6" r="2.2" fill="#fff" stroke="#55a91c" stroke-width="1.3"/>
<circle cx="588.0" cy="397.6" r="2.2" fill="#fff" stroke="#55a91c" stroke-width="1.3"/>
<circle cx="613.7" cy="397.6" r="2.2" fill="#fff" stroke="#55a91c" stroke-width="1.3"/>
</g>
<g font-family="Liberation Sans, sans-serif" font-size="7" fill="#aaa">
<text x="158" y="313.5" text-anchor="end">1</text>
<text x="158" y="357.5" text-anchor="end">0.5</text>
<text x="157" y="400" text-anchor="end" fill="#c4c4c4">0</text>
</g>
<g font-family="Liberation Sans, sans-serif" font-size="7.7" fill="#a8a8a8">
<text x="182.8" y="413.5" text-anchor="end" transform="rotate(-45 182.8 413.5)">new york city</text>
<text x="208.5" y="413.5" text-anchor="end" transform="rotate(-45 208.5 413.5)">york city</text>
<text x="234.1" y="413.5" text-anchor="end" transform="rotate(-45 234.1 413.5)">museum</text>
<text x="259.8" y="413.5" text-anchor="end" transform="rotate(-45 259.8 413.5)">art</text>
<text x="285.5" y="413.5" text-anchor="end" transform="rotate(-45 285.5 413.5)">top</text>
<text x="311.2" y="413.5" text-anchor="end" transform="rotate(-45 311.2 413.5)">museums</text>
<text x="336.8" y="413.5" text-anchor="end" transform="rotate(-45 336.8 413.5)">guide</text>
<text x="362.5" y="413.5" text-anchor="end" transform="rotate(-45 362.5 413.5)">map</text>
<text x="388.2" y="413.5" text-anchor="end" transform="rotate(-45 388.2 413.5)">restaurants</text>
<text x="413.8" y="413.5" text-anchor="end" transform="rotate(-45 413.8 413.5)">site</text>
<text x="439.5" y="413.5" text-anchor="end" transform="rotate(-45 439.5 413.5)">privacy</text>
<text x="465.2" y="413.5" text-anchor="end" transform="rotate(-45 465.2 413.5)">park</text>
<text x="490.8" y="413.5" text-anchor="end" transform="rotate(-45 490.8 413.5)">central</text>
<text x="516.5" y="413.5" text-anchor="end" transform="rotate(-45 516.5 413.5)">best</text>
<text x="542.2" y="413.5" text-anchor="end" transform="rotate(-45 542.2 413.5)">world</text>
<text x="567.9" y="413.5" text-anchor="end" transform="rotate(-45 567.9 413.5)">brooklyn</text>
<text x="593.5" y="413.5" text-anchor="end" transform="rotate(-45 593.5 413.5)">manhattan</text>
<text x="624.3" y="407" text-anchor="end" transform="rotate(-45 624.3 407)">shopping</text>
</g>
</svg>
</div>
<div class="abs" style="left:126.2px;top:31.6px;width:1.4px;height:428px;background:#f8f8f8"></div>
<div class="abs" style="left:0;top:0;width:800px;height:459px;pointer-events:none">
<div class="lg" style="top:279.00px"><i style="background:#55a91c"><svg width="10" height="10" viewBox="0 0 10 10"><path d="M3 5.3l1.5 1.5 2.7-3.2" fill="none" stroke="#fff" stroke-width="1.25"/></svg></i><span>Your page</span></div>
<div class="lg" style="top:294.37px"><i style="background:#e8490f"><svg width="10" height="10" viewBox="0 0 10 10"><path d="M3 5.3l1.5 1.5 2.7-3.2" fill="none" stroke="#fff" stroke-width="1.25"/></svg></i><span>fodors.com/world/north-america/usa/new-yo...</span></div>
<div class="lg" style="top:309.74px"><i style="background:#4a86e8"><svg width="10" height="10" viewBox="0 0 10 10"><path d="M3 5.3l1.5 1.5 2.7-3.2" fill="none" stroke="#fff" stroke-width="1.25"/></svg></i><span>tripadvisor.co.uk/Attractions-g60763-Activitie...</span></div>
<div class="lg" style="top:325.11px"><i style="background:#f5820a"><svg width="10" height="10" viewBox="0 0 10 10"><path d="M3 5.3l1.5 1.5 2.7-3.2" fill="none" stroke="#fff" stroke-width="1.25"/></svg></i><span>tripadvisor.com/Attractions-g60763-Activities...</span></div>
<div class="lg" style="top:340.48px"><i style="background:#8e2a5e"><svg width="10" height="10" viewBox="0 0 10 10"><path d="M3 5.3l1.5 1.5 2.7-3.2" fill="none" stroke="#fff" stroke-width="1.25"/></svg></i><span>travel.usnews.com/New_York_NY/Things_T...</span></div>
<div class="lg" style="top:355.85px"><i style="background:#1a9fc0"><svg width="10" height="10" viewBox="0 0 10 10"><path d="M3 5.3l1.5 1.5 2.7-3.2" fill="none" stroke="#fff" stroke-width="1.25"/></svg></i><span>airbnb.com/things-to-do/new-york</span></div>
<div class="lg" style="top:371.22px"><i style="background:#e6194f"><svg width="10" height="10" viewBox="0 0 10 10"><path d="M3 5.3l1.5 1.5 2.7-3.2" fill="none" stroke="#fff" stroke-width="1.25"/></svg></i><span>timeout.com/newyork/things-to-do</span></div>
<div class="lg" style="top:386.59px"><i style="background:#7fc896"><svg width="10" height="10" viewBox="0 0 10 10"><path d="M3 5.3l1.5 1.5 2.7-3.2" fill="none" stroke="#fff" stroke-width="1.25"/></svg></i><span>citypass.com/new-york/things-to-do-new-york</span></div>
<div class="lg" style="top:401.96px"><i style="background:#7b74b8"><svg width="10" height="10" viewBox="0 0 10 10"><path d="M3 5.3l1.5 1.5 2.7-3.2" fill="none" stroke="#fff" stroke-width="1.25"/></svg></i><span>atlasobscura.com/things-to-do/new-york</span></div>
<div class="lg" style="top:417.33px"><i style="background:#0b6b47"><svg width="10" height="10" viewBox="0 0 10 10"><path d="M3 5.3l1.5 1.5 2.7-3.2" fill="none" stroke="#fff" stroke-width="1.25"/></svg></i><span>cntraveler.com/galleries/2015-09-18/25-thin...</span></div>
<div class="lg" style="top:432.70px"><i style="background:#fbc3b3"><svg width="10" height="10" viewBox="0 0 10 10"><path d="M3 5.3l1.5 1.5 2.7-3.2" fill="none" stroke="#fff" stroke-width="1.25"/></svg></i><span>nycgo.com/must-see-nyc</span></div>
</div>
</body></html>
